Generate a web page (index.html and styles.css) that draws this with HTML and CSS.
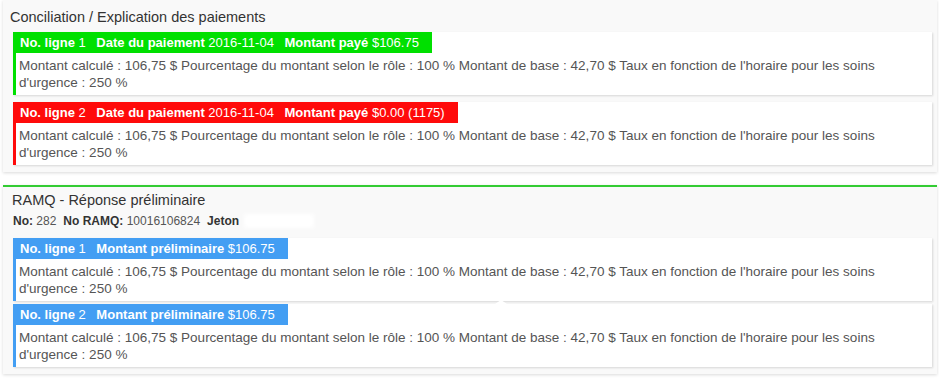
FILE: index.html
```html
<!DOCTYPE html>
<html lang="fr">
<head>
    <meta charset="UTF-8">
    <meta name="viewport" content="width=device-width, initial-scale=1.0">
    <title>Conciliation</title>
    <link rel="stylesheet" href="styles.css">
</head>
<body>
    <section class="panel">
        <h2 class="panel-title">Conciliation / Explication des paiements</h2>
        <div class="card card-green">
            <div class="card-head">
                <span class="field"><b>No. ligne</b> 1</span>
                <span class="field"><b>Date du paiement</b> 2016-11-04</span>
                <span class="field"><b>Montant payé</b> $106.75</span>
            </div>
            <div class="card-body">Montant calculé : 106,75 $ Pourcentage du montant selon le rôle : 100 % Montant de base : 42,70 $ Taux en fonction de l'horaire pour les soins d'urgence : 250 %</div>
        </div>
        <div class="card card-red">
            <div class="card-head">
                <span class="field"><b>No. ligne</b> 2</span>
                <span class="field"><b>Date du paiement</b> 2016-11-04</span>
                <span class="field"><b>Montant payé</b> $0.00 (1175)</span>
            </div>
            <div class="card-body">Montant calculé : 106,75 $ Pourcentage du montant selon le rôle : 100 % Montant de base : 42,70 $ Taux en fonction de l'horaire pour les soins d'urgence : 250 %</div>
        </div>
    </section>

    <section class="panel panel-ramq">
        <h2 class="panel-title">RAMQ - Réponse préliminaire</h2>
        <div class="info">
            <span class="field"><b>No:</b> 282</span>
            <span class="field"><b>No RAMQ:</b> 10016106824</span>
            <span class="field"><b>Jeton</b></span>
            <span class="hidden-token"></span>
        </div>
        <div class="cards-tight">
            <div class="card card-blue">
                <div class="card-head">
                    <span class="field"><b>No. ligne</b> 1</span>
                    <span class="field"><b>Montant préliminaire</b> $106.75</span>
                </div>
                <div class="card-body">Montant calculé : 106,75 $ Pourcentage du montant selon le rôle : 100 % Montant de base : 42,70 $ Taux en fonction de l'horaire pour les soins d'urgence : 250 %</div>
            </div>
            <div class="card card-blue has-caret">
                <div class="card-head">
                    <span class="field"><b>No. ligne</b> 2</span>
                    <span class="field"><b>Montant préliminaire</b> $106.75</span>
                </div>
                <div class="card-body">Montant calculé : 106,75 $ Pourcentage du montant selon le rôle : 100 % Montant de base : 42,70 $ Taux en fonction de l'horaire pour les soins d'urgence : 250 %</div>
            </div>
        </div>
    </section>
</body>
</html>
```

FILE: styles.css
```css
body {
    font-family: "Liberation Sans", Arial, sans-serif;
    margin: 0;
    padding: 0;
    background-color: #fff;
    color: #555;
}
.panel {
    margin: 0 2px 13px 3px;
    padding: 7px 5px 7px 10px;
    background-color: #f9f9f9;
    box-shadow: 0 1px 3px rgba(0, 0, 0, 0.15);
}
.panel-title {
    margin: 0 0 5px -3px;
    font-size: 14.5px;
    font-weight: normal;
    line-height: 20px;
    color: #333;
}
.panel-ramq {
    border-top: 2px solid #33cc33;
    padding-top: 3px;
}
.panel-ramq .panel-title {
    margin-left: -1px;
}
.info {
    font-size: 12px;
    line-height: 16px;
    color: #555;
    margin: -2px 0 9px 0;
    display: flex;
    align-items: center;
}
.info b {
    color: #333;
}
.field {
    margin-right: 7px;
}
.hidden-token {
    display: inline-block;
    width: 70px;
    height: 14px;
    background: #fff;
    filter: blur(2px);
    margin-left: -2px;
}
.card {
    display: flex;
    flex-direction: column;
    align-items: flex-start;
    margin-bottom: 7px;
    background: #fff;
    box-shadow: 1px 1px 2px rgba(0, 0, 0, 0.14);
    position: relative;
}
.card:last-child {
    margin-bottom: 0;
}
.cards-tight .card {
    margin-bottom: 3px;
}
.cards-tight .card:last-child {
    margin-bottom: 0;
}
.card-head {
    font-size: 13px;
    line-height: 21px;
    color: #fff;
    padding: 0 6px 0 7px;
    white-space: nowrap;
}
.card-body {
    align-self: stretch;
    font-size: 13.5px;
    line-height: 17px;
    padding: 4px 8px 4px 3px;
    border-left: 3px solid;
}
.card-green .card-head { background-color: #00e000; }
.card-green .card-body { border-left-color: #00e000; }
.card-red .card-head { background-color: #ff0a0a; }
.card-red .card-body { border-left-color: #ff0a0a; }
.card-blue .card-head { background-color: #439ef3; }
.card-blue .card-body { border-left-color: #439ef3; }
.has-caret::before {
    content: "";
    position: absolute;
    left: 482px;
    top: -4px;
    border-left: 6px solid transparent;
    border-right: 6px solid transparent;
    border-bottom: 4px solid #fff;
}
```
